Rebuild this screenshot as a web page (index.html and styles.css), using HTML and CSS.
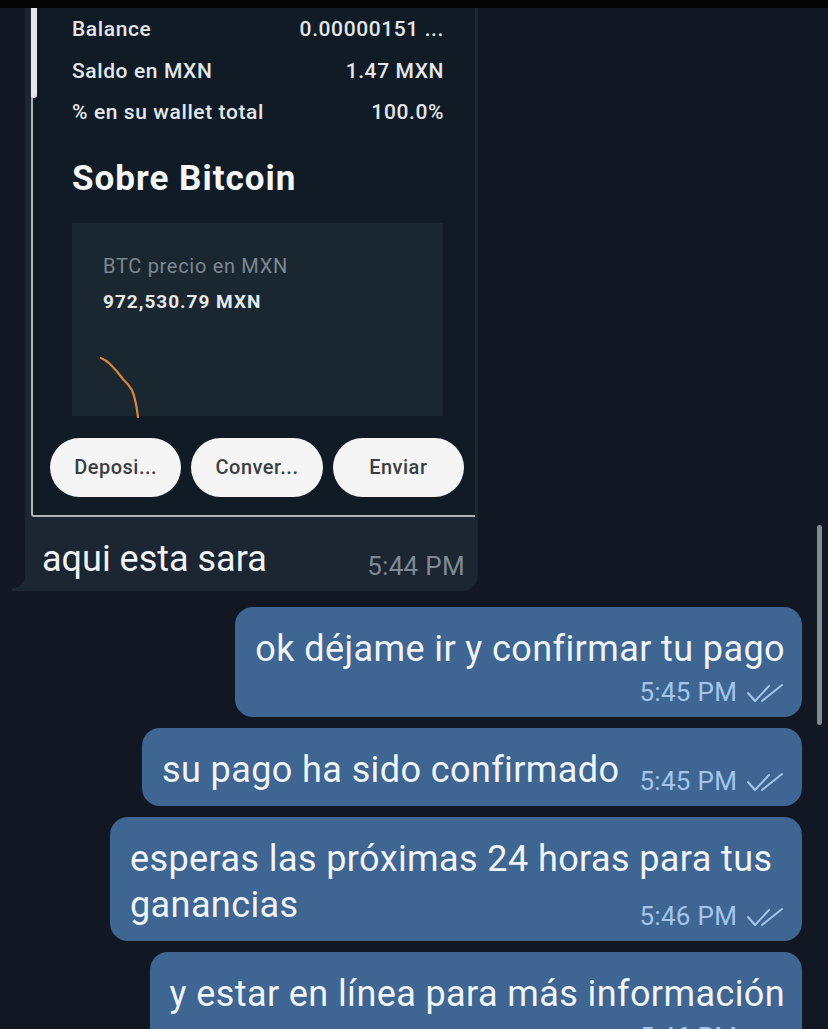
FILE: index.html
```html
<!DOCTYPE html>
<html lang="es">
<head>
  <meta charset="UTF-8" />
  <meta name="viewport" content="width=device-width, initial-scale=1.0" />
  <title>Chat</title>
  <link rel="stylesheet" href="styles.css">
</head>
<body>

  <div class="topbar"></div>

  <div class="chat">

    <div class="msg in">
      <div class="shot">
        <div class="rows">
          <div class="row"><span>Balance</span><span>0.00000151 ...</span></div>
          <div class="row"><span>Saldo en MXN</span><span>1.47 MXN</span></div>
          <div class="row"><span>% en su wallet total</span><span>100.0%</span></div>
        </div>
        <h2 class="title">Sobre Bitcoin</h2>
        <div class="price-card">
          <div class="price-label">BTC precio en MXN</div>
          <div class="price-value">972,530.79 MXN</div>
          <svg class="spark" width="44" height="62" viewBox="0 0 44 62">
            <path d="M1 2 Q6 4 10 8 Q17 15 23 23 Q29 29 32 34 Q36 44 38 61" fill="none" stroke="#d4893a" stroke-width="2.2" stroke-linecap="round"/>
          </svg>
        </div>
        <div class="actions">
          <button class="pill">Deposi...</button>
          <button class="pill">Conver...</button>
          <button class="pill">Enviar</button>
        </div>
      </div>
      <div class="caption">
        <span class="text">aqui esta sara</span>
        <span class="time">5:44 PM</span>
      </div>
    </div>

    <div class="msg out wrap">
      <span class="text">ok déjame ir y confirmar tu pago</span>
      <span class="meta">5:45 PM <svg class="ticks" width="40" height="20" viewBox="0 0 40 20"><path d="M3 10 L10 18 L24 3 M17 18 L37 2" fill="none" stroke="currentColor" stroke-width="2" stroke-linecap="round" stroke-linejoin="round"/></svg></span>
    </div>

    <div class="msg out">
      <span class="text">su pago ha sido confirmado</span>
      <span class="meta">5:45 PM <svg class="ticks" width="40" height="20" viewBox="0 0 40 20"><path d="M3 10 L10 18 L24 3 M17 18 L37 2" fill="none" stroke="currentColor" stroke-width="2" stroke-linecap="round" stroke-linejoin="round"/></svg></span>
    </div>

    <div class="msg out">
      <span class="text">esperas las próximas 24 horas para tus ganancias</span>
      <span class="meta">5:46 PM <svg class="ticks" width="40" height="20" viewBox="0 0 40 20"><path d="M3 10 L10 18 L24 3 M17 18 L37 2" fill="none" stroke="currentColor" stroke-width="2" stroke-linecap="round" stroke-linejoin="round"/></svg></span>
    </div>

    <div class="msg out wrap">
      <span class="text">y estar en línea para más información</span>
      <span class="meta">5:46 PM <svg class="ticks" width="40" height="20" viewBox="0 0 40 20"><path d="M3 10 L10 18 L24 3 M17 18 L37 2" fill="none" stroke="currentColor" stroke-width="2" stroke-linecap="round" stroke-linejoin="round"/></svg></span>
    </div>

  </div>

  <div class="scrollbar"></div>

</body>
</html>
```

FILE: styles.css
```css
body {
  margin: 0;
  height: 1029px;
  overflow: hidden;
  background-color: #111824;
  font-family: Roboto, "Liberation Sans", Arial, sans-serif;
  color: #f1f4f7;
  position: relative;
}

.topbar {
  height: 8px;
  background-color: #050506;
}

.chat {
  display: flex;
  flex-direction: column;
  padding: 0 26px 0 25px;
}

.msg {
  position: relative;
}

/* incoming message with the screenshot */
.msg.in {
  align-self: flex-start;
  width: 444px;
  padding: 0 3px 10px 6px;
  background-color: #1c2532;
  border-radius: 0 0 16px 0;
  margin-bottom: 16px;
}

.msg.in::after {
  content: "";
  position: absolute;
  left: -13px;
  bottom: 0;
  width: 13px;
  height: 16px;
  background: radial-gradient(circle at 0 0, transparent 13px, #1c2532 13.5px);
}

.shot {
  position: relative;
  background-color: #111b25;
  border-left: 2px solid #aeb5bc;
  border-bottom: 2px solid #aeb5bc;
  border-radius: 0 0 0 3px;
  padding-bottom: 18px;
}

.shot::before {
  content: "";
  position: absolute;
  left: -2px;
  top: 0;
  width: 6px;
  height: 90px;
  background-color: #e4e6e8;
  border-radius: 0 0 3px 3px;
}

.rows {
  padding: 0 31px 0 39px;
}

.row {
  display: flex;
  justify-content: space-between;
  height: 41.5px;
  line-height: 42px;
  font-size: 21px;
  font-weight: 500;
  letter-spacing: 0.6px;
  color: #e3e7eb;
}

.title {
  margin: 24px 0 0 39px;
  font-size: 35px;
  line-height: 44px;
  font-weight: 700;
  letter-spacing: 1px;
  color: #f4f6f8;
}

.price-card {
  display: flex;
  flex-direction: column;
  height: 193px;
  box-sizing: border-box;
  margin: 22px 32px 0 39px;
  padding: 32px 31px 0;
  background-color: #1a2731;
}

.price-label {
  font-size: 20px;
  line-height: 22px;
  letter-spacing: 0.7px;
  color: #7c8791;
}

.price-value {
  margin-top: 14px;
  font-size: 19px;
  line-height: 22px;
  font-weight: 700;
  letter-spacing: 1px;
  color: #e6e9ec;
}

.spark {
  margin: auto 0 -2px -3px;
}

.actions {
  display: flex;
  gap: 10px;
  margin-top: 22px;
  padding: 0 11px 0 17px;
}

.pill {
  flex: 1;
  height: 59px;
  border: none;
  border-radius: 30px;
  background-color: #f5f5f5;
  color: #3a3f45;
  font-family: Roboto, "Liberation Sans", Arial, sans-serif;
  font-size: 20px;
  font-weight: 500;
  letter-spacing: 0.5px;
}

.caption {
  display: flex;
  justify-content: space-between;
  align-items: flex-end;
  margin-top: 20px;
  padding: 0 10px 0 11px;
}

.caption .text {
  font-size: 36px;
  line-height: 44px;
}

.caption .time {
  font-size: 26px;
  line-height: 26px;
  letter-spacing: 0.3px;
  color: #7f8a96;
  margin-bottom: 2px;
}

/* outgoing messages */
.msg.out {
  align-self: flex-end;
  display: flow-root;
  max-width: 655px;
  padding: 19px 17px 12px 20px;
  margin-bottom: 11px;
  background-color: #3f6592;
  border-radius: 18px;
  font-size: 36px;
  line-height: 46px;
  letter-spacing: 0.4px;
}

.meta {
  float: right;
  margin: 21px 0 0 20px;
  font-size: 26px;
  line-height: 26px;
  letter-spacing: 0.3px;
  color: #a4c6ea;
  white-space: nowrap;
}

.msg.out.wrap .meta {
  float: none;
  display: block;
  text-align: right;
  margin: 7px 0 0;
}

.ticks {
  vertical-align: -2px;
  margin-left: 1px;
}

.scrollbar {
  position: absolute;
  right: 6px;
  top: 525px;
  width: 5px;
  height: 200px;
  border-radius: 3px;
  background-color: #858a90;
}
```
